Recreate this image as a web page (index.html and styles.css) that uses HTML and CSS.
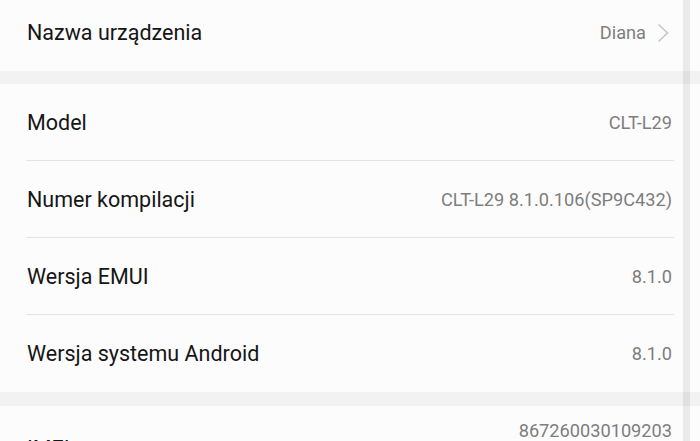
FILE: index.html
```html
<!DOCTYPE html>
<html lang="pl">
<head>
  <meta charset="UTF-8">
  <meta name="viewport" content="width=device-width, initial-scale=1.0">
  <title>Informacje o telefonie</title>
  <link rel="stylesheet" href="styles.css">
</head>
<body>
  <div class="group group-first">
    <div class="row row-link">
      <span class="label">Nazwa urządzenia</span>
      <span class="value">Diana
        <svg class="chevron" width="12" height="20" viewBox="0 0 12 20">
          <path d="M1.5 1.5 L10.5 10 L1.5 18.5" fill="none" stroke="#c6c6c6" stroke-width="1.6"/>
        </svg>
      </span>
    </div>
  </div>

  <div class="group">
    <div class="row">
      <span class="label">Model</span>
      <span class="value">CLT-L29</span>
    </div>
    <div class="row">
      <span class="label">Numer kompilacji</span>
      <span class="value">CLT-L29 8.1.0.106(SP9C432)</span>
    </div>
    <div class="row">
      <span class="label">Wersja EMUI</span>
      <span class="value">8.1.0</span>
    </div>
    <div class="row">
      <span class="label">Wersja systemu Android</span>
      <span class="value">8.1.0</span>
    </div>
  </div>

  <div class="group group-last">
    <div class="row row-imei">
      <span class="label">IMEI</span>
      <span class="value">867260030109203</span>
    </div>
  </div>

  <div class="scrollbar"></div>
</body>
</html>
```

FILE: styles.css
```css
body {
  margin: 0;
  font-family: Roboto, "Noto Sans", sans-serif;
  background: #fcfcfc;
  height: 100vh;
  overflow: hidden;
  position: relative;
}
.group {
  background: #fcfcfc;
  border-top: 13px solid #f2f2f2;
}
.group-first {
  border-top: none;
}
.group-last {
  border-top-width: 14px;
}
.row {
  display: flex;
  align-items: center;
  justify-content: space-between;
  height: 77px;
  padding: 0 28px 0 27px;
  position: relative;
}
.row + .row::before {
  content: "";
  position: absolute;
  top: -1px;
  left: 26px;
  right: 26px;
  height: 1px;
  background: #e4e4e4;
}
.group-first .row {
  height: 71px;
  padding-bottom: 6px;
  box-sizing: border-box;
}
.row-link {
  padding-right: 31px;
}
.label {
  font-size: 21.5px;
  color: #161616;
}
.value {
  font-size: 18.2px;
  color: #7e7e7e;
  display: flex;
  align-items: center;
  gap: 11px;
}
.row-imei {
  height: 96px;
  align-items: flex-start;
}
.row-imei .label {
  margin-top: 30px;
}
.row-imei .value {
  margin-top: 16px;
  line-height: 18px;
}
.scrollbar {
  position: absolute;
  top: 0;
  bottom: 0;
  left: 683px;
  width: 7px;
  background: rgba(0, 0, 0, 0.07);
}
```
